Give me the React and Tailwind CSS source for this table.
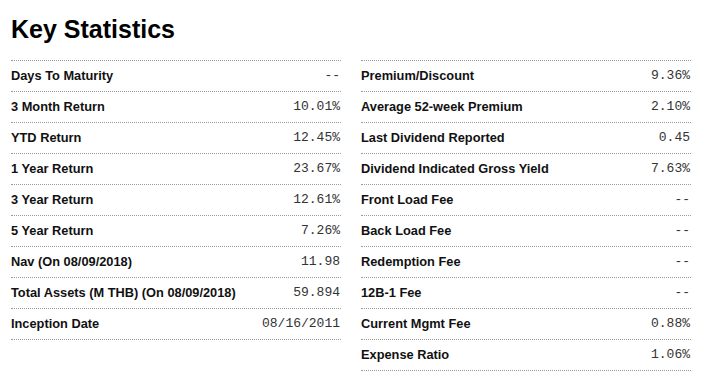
import React from 'react';

const left = [
  ['Days To Maturity', '--'],
  ['3 Month Return', '10.01%'],
  ['YTD Return', '12.45%'],
  ['1 Year Return', '23.67%'],
  ['3 Year Return', '12.61%'],
  ['5 Year Return', '7.26%'],
  ['Nav (On 08/09/2018)', '11.98'],
  ['Total Assets (M THB) (On 08/09/2018)', '59.894'],
  ['Inception Date', '08/16/2011'],
];

const right = [
  ['Premium/Discount', '9.36%'],
  ['Average 52-week Premium', '2.10%'],
  ['Last Dividend Reported', '0.45'],
  ['Dividend Indicated Gross Yield', '7.63%'],
  ['Front Load Fee', '--'],
  ['Back Load Fee', '--'],
  ['Redemption Fee', '--'],
  ['12B-1 Fee', '--'],
  ['Current Mgmt Fee', '0.88%'],
  ['Expense Ratio', '1.06%'],
];

const StatList = ({ rows }) => (
  <div className="w-[330px] border-t border-dotted border-[#9a9a9a]">
    {rows.map((r, i) => (
      <div key={i} className="flex items-center justify-between h-[31px] border-b border-dotted border-[#9a9a9a]">
        <span className="font-['Liberation_Sans',Arial,sans-serif] font-bold text-[12.8px] text-[#111]">{r[0]}</span>
        <span className="font-['Liberation_Mono','Courier_New',monospace] text-[13px] text-[#333] pr-[1px]">{r[1]}</span>
      </div>
    ))}
  </div>
);

export default function App() {
  return (
    <div className="bg-white w-[709px] h-[382px] pl-[11px] pt-[17px]">
      <h1 className="font-['Liberation_Sans',Arial,sans-serif] font-bold text-[25px] leading-none text-black h-[43px]">Key Statistics</h1>
      <div className="flex gap-[20px]">
        <StatList rows={left} />
        <StatList rows={right} />
      </div>
    </div>
  );
}
